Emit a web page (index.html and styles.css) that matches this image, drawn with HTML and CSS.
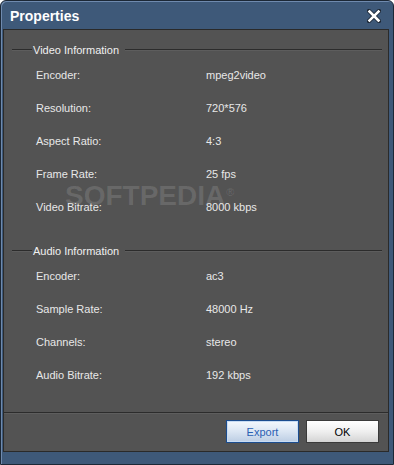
FILE: index.html
```html
<!DOCTYPE html>
<html>
<head>
<meta charset="utf-8">
<link rel="stylesheet" href="styles.css">
</head>
<body>
<div class="window">
  <div class="titlebar">
    <span class="title">Properties</span>
    <svg class="close" width="14" height="14" viewBox="0 0 14 14">
      <path d="M2 2 L12 12 M12 2 L2 12" stroke="#1a2533" stroke-width="4.2" stroke-linecap="square" fill="none"/>
      <path d="M2.5 2.5 L11.5 11.5 M11.5 2.5 L2.5 11.5" stroke="#ffffff" stroke-width="2.6" stroke-linecap="square" fill="none"/>
    </svg>
  </div>
  <div class="content">
    <div class="groups">
      <div class="group">
        <div class="group-head"><span class="line short"></span><span class="group-title">Video Information</span><span class="line long"></span></div>
        <div class="row"><span class="label">Encoder:</span><span class="value">mpeg2video</span></div>
        <div class="row"><span class="label">Resolution:</span><span class="value">720*576</span></div>
        <div class="row"><span class="label">Aspect Ratio:</span><span class="value">4:3</span></div>
        <div class="row"><span class="label">Frame Rate:</span><span class="value">25 fps</span></div>
        <div class="row"><span class="label">Video Bitrate:</span><span class="value">8000 kbps</span></div>
      </div>
      <div class="group audio">
        <div class="group-head"><span class="line short"></span><span class="group-title">Audio Information</span><span class="line long"></span></div>
        <div class="row"><span class="label">Encoder:</span><span class="value">ac3</span></div>
        <div class="row"><span class="label">Sample Rate:</span><span class="value">48000 Hz</span></div>
        <div class="row"><span class="label">Channels:</span><span class="value">stereo</span></div>
        <div class="row"><span class="label">Audio Bitrate:</span><span class="value">192 kbps</span></div>
      </div>
    </div>
    <div class="footer">
      <button class="btn btn-export">Export</button>
      <button class="btn btn-ok">OK</button>
    </div>
    <div class="watermark">SOFTPEDIA<span class="reg">®</span></div>
  </div>
</div>
</body>
</html>
```
FILE: styles.css
```css
html, body {
  margin: 0;
  padding: 0;
  background: #ffffff;
}
body {
  width: 394px;
  height: 465px;
  font-family: "Liberation Sans", Arial, sans-serif;
}
.window {
  box-sizing: border-box;
  width: 394px;
  height: 465px;
  border: 1px solid #1c2836;
  border-radius: 6px 6px 0 0;
  background: #3e5979;
  display: flex;
  flex-direction: column;
  padding: 0 4px 12px 2px;
  box-shadow: inset 1px 1px 0 #6f8aae;
}
.titlebar {
  height: 28px;
  display: flex;
  align-items: center;
  justify-content: space-between;
  padding: 0 8px 0 7px;
  flex: none;
}
.title {
  color: #ffffff;
  font-weight: bold;
  font-size: 14px;
  margin-top: 1px;
}
.close {
  display: block;
  margin-top: 1px;
}
.content {
  position: relative;
  flex: 1;
  background: #535353;
  border: 1px solid #2a2a2a;
  display: flex;
  flex-direction: column;
}
.groups {
  flex: 1;
  padding-top: 12px;
}
.group-head {
  height: 16px;
  display: flex;
  align-items: center;
  margin: 0 6px 0 8px;
}
.line {
  height: 0;
  border-top: 1px solid #2c2c2c;
  border-bottom: 1px solid #5d5d5d;
  margin-top: -1px;
}
.line.short { width: 20px; }
.line.long { flex: 1; }
.group-title {
  color: #f0f0f0;
  font-size: 11px;
  padding: 0 6px 0 1px;
}
.audio {
  margin-top: 20px;
}
.row {
  height: 33px;
  display: flex;
  align-items: center;
  font-size: 11px;
  color: #e8e8e8;
  padding-left: 32px;
}
.label {
  width: 170px;
}
.footer {
  flex: none;
  border-top: 1px solid #2c2c2c;
  box-shadow: inset 0 1px 0 #5e5e5e;
  padding: 7px 9px 8px 0;
  display: flex;
  justify-content: flex-end;
  gap: 7px;
}
.btn {
  width: 73px;
  height: 23px;
  font-family: "Liberation Sans", Arial, sans-serif;
  font-size: 11px;
  padding: 0;
  cursor: default;
}
.btn-export {
  border: 1px solid #1b4c8e;
  background: linear-gradient(#f4f8fd, #dbe6f3 50%, #bccde3);
  color: #2b5fb3;
  box-shadow: inset 0 0 0 1px #c8dcf3;
}
.btn-ok {
  border: 1px solid #3a3a3a;
  background: linear-gradient(#ffffff, #efefef 50%, #d4d4d4);
  color: #000000;
}
.watermark {
  position: absolute;
  left: 61px;
  top: 152px;
  font-family: "Liberation Sans", Arial, sans-serif;
  font-weight: bold;
  font-size: 28px;
  line-height: 28px;
  color: rgba(255, 255, 255, 0.13);
  pointer-events: none;
}
.reg {
  font-size: 11px;
  vertical-align: top;
  font-weight: normal;
  position: relative;
  top: -4px;
  left: 1px;
}
```
